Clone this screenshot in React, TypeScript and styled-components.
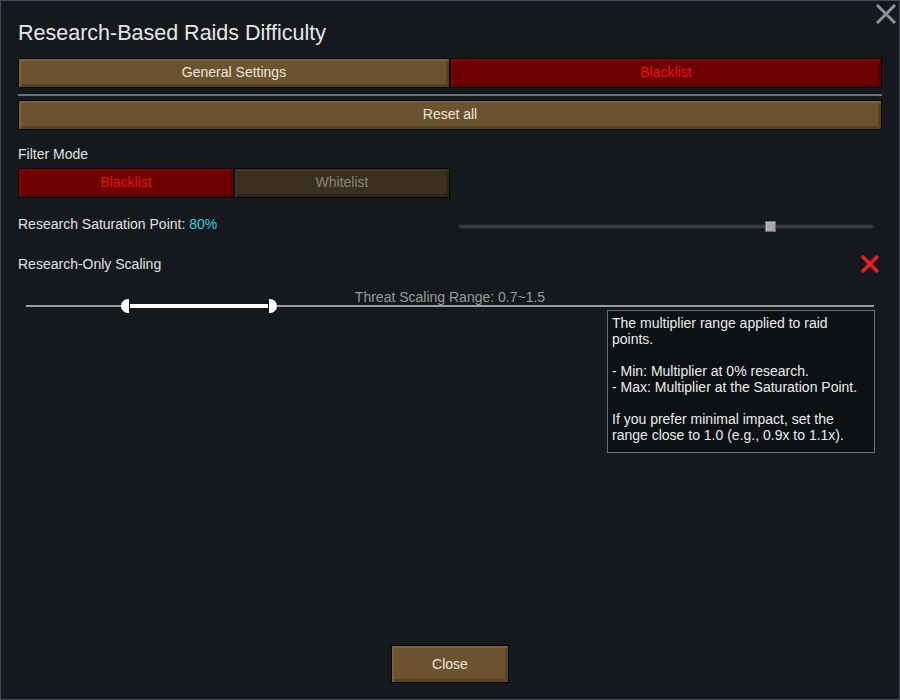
import React from "react";
import styled, { createGlobalStyle, css } from "styled-components";

const Global = createGlobalStyle`
  html, body { margin: 0; padding: 0; background: #15181d; }
  body { font-family: "Liberation Sans", Arial, sans-serif; }
  * { box-sizing: border-box; }
`;

const Window = styled.div`
  position: relative;
  width: 900px;
  height: 700px;
  background: #15181d;
  border: 1px solid #464a50;
  padding: 19px 17px 16px 17px;
  display: flex;
  flex-direction: column;
  color: #e2e2e2;
  font-size: 14px;
`;

const CloseIcon = styled.button`
  position: absolute;
  top: 2px;
  right: 2px;
  width: 22px;
  height: 22px;
  padding: 0;
  border: none;
  background: transparent;
  display: flex;
  align-items: center;
  justify-content: center;
`;

const Title = styled.h1`
  margin: 0 0 8px 0;
  height: 30px;
  line-height: 27px;
  font-size: 21.5px;
  font-weight: normal;
  color: #e6e6e6;
`;

type Tone = "tan" | "red" | "dim";

const toneStyles: Record<Tone, ReturnType<typeof css>> = {
  tan: css`
    background: #6b5330;
    color: #ece6d8;
    box-shadow: inset 2px 2px 0 #7d6238, inset -3px -3px 0 #574221;
  `,
  red: css`
    background: #6f0000;
    color: #e81414;
    box-shadow: inset 2px 2px 0 #7d0606, inset -3px -3px 0 #5a0000;
  `,
  dim: css`
    background: #3b2f1f;
    color: #858380;
    box-shadow: inset 2px 2px 0 #433524, inset -3px -3px 0 #302618;
  `,
};

const Button = styled.button<{ $tone: Tone }>`
  flex: 1;
  height: 30px;
  border: 1px solid #050505;
  font-family: "Liberation Sans", Arial, sans-serif;
  font-size: 14px;
  padding: 0 0 2px 0;
  cursor: pointer;
  ${(p) => toneStyles[p.$tone]}
`;

const ButtonRow = styled.div<{ $width?: number }>`
  display: flex;
  width: ${(p) => (p.$width ? `${p.$width}px` : "100%")};
`;

const Divider = styled.div`
  height: 2px;
  background: #6f7276;
  margin: 6px 0 4px 0;
`;

const Label = styled.div<{ $mt: number; $mb?: number }>`
  height: 20px;
  line-height: 20px;
  margin-top: ${(p) => p.$mt}px;
  margin-bottom: ${(p) => p.$mb ?? 0}px;
  color: #e2e2e2;
`;

const SettingRow = styled.div<{ $mt: number }>`
  display: flex;
  align-items: center;
  justify-content: space-between;
  height: 24px;
  margin-top: ${(p) => p.$mt}px;
`;

const Accent = styled.span`
  color: #2ed3e0;
`;

const SliderTrack = styled.div`
  position: relative;
  width: 416px;
  height: 5px;
  margin-right: 8px;
  margin-top: 4px;
  background: #393b3d;
  border: 1px solid #1f2123;
  border-radius: 3px;
`;

const SliderHandle = styled.div`
  position: absolute;
  top: -4px;
  width: 11px;
  height: 11px;
  margin-left: -5px;
  background: #a6a6a6;
  border: 1px solid #6c6c6c;
  box-shadow: inset 1px 1px 0 #c4c4c4;
`;

const RedX = styled.div`
  width: 22px;
  height: 22px;
  margin-right: 1px;
  display: flex;
  align-items: center;
  justify-content: center;
`;

const RangeBlock = styled.div`
  display: flex;
  flex-direction: column;
  margin: 14px 8px 0 8px;
`;

const RangeLabel = styled.div`
  height: 14px;
  line-height: 14px;
  text-align: center;
  font-size: 14px;
  color: #9a9a9a;
`;

const RangeTrack = styled.div`
  position: relative;
  height: 2px;
  margin-top: 1px;
  background: #9d9d9d;
`;

const RangeFill = styled.div`
  position: absolute;
  top: -1px;
  height: 4px;
  background: #ffffff;
`;

const RangeHandle = styled.div<{ $side: "left" | "right" }>`
  position: absolute;
  top: -6px;
  width: 9px;
  height: 14px;
  background: #ffffff;
  ${(p) =>
    p.$side === "left"
      ? css`
          border-radius: 7px 0 0 7px;
          border-right: 1px solid #15181d;
          margin-left: -9px;
        `
      : css`
          border-radius: 0 7px 7px 0;
          border-left: 1px solid #15181d;
        `}
`;

const Tooltip = styled.div`
  position: absolute;
  left: 606px;
  top: 309px;
  width: 268px;
  height: 143px;
  padding: 4px 4px;
  background: #0e1114;
  border: 1px solid #6a6f74;
  color: #ececec;
  font-size: 14px;
  line-height: 16px;
  white-space: pre-line;
`;

const Footer = styled.div`
  margin-top: auto;
  display: flex;
  justify-content: center;
`;

const CloseButton = styled(Button)`
  flex: none;
  width: 118px;
  height: 38px;
  padding: 0;
`;

const tooltipText = `The multiplier range applied to raid points.

- Min: Multiplier at 0% research.
- Max: Multiplier at the Saturation Point.

If you prefer minimal impact, set the range close to 1.0 (e.g., 0.9x to 1.1x).`;

export default function App() {
  const saturation = 0.752;
  const rangeStart = 104;
  const rangeEnd = 242;
  return (
    <>
      <Global />
      <Window>
        <CloseIcon aria-label="close">
          <svg width="20" height="20" viewBox="0 0 20 20">
            <path d="M2 2 L18 18 M18 2 L2 18" stroke="#8e9195" strokeWidth="3" strokeLinecap="square" />
          </svg>
        </CloseIcon>
        <Title>Research-Based Raids Difficulty</Title>
        <ButtonRow>
          <Button $tone="tan">General Settings</Button>
          <Button $tone="red">Blacklist</Button>
        </ButtonRow>
        <Divider />
        <ButtonRow>
          <Button $tone="tan">Reset all</Button>
        </ButtonRow>
        <Label $mt={14} $mb={4}>Filter Mode</Label>
        <ButtonRow $width={432}>
          <Button $tone="red">Blacklist</Button>
          <Button $tone="dim">Whitelist</Button>
        </ButtonRow>
        <SettingRow $mt={14}>
          <span>
            Research Saturation Point: <Accent>80%</Accent>
          </span>
          <SliderTrack>
            <SliderHandle style={{ left: `${saturation * 100}%` }} />
          </SliderTrack>
        </SettingRow>
        <SettingRow $mt={16}>
          <span>Research-Only Scaling</span>
          <RedX>
            <svg width="22" height="22" viewBox="0 0 22 22">
              <path d="M3 3 L19 19 M19 3 L3 19" stroke="#e3201e" strokeWidth="3.6" strokeLinecap="butt" />
            </svg>
          </RedX>
        </SettingRow>
        <RangeBlock>
          <RangeLabel>Threat Scaling Range: 0.7~1.5</RangeLabel>
          <RangeTrack>
            <RangeFill style={{ left: rangeStart, width: rangeEnd - rangeStart }} />
            <RangeHandle $side="left" style={{ left: rangeStart }} />
            <RangeHandle $side="right" style={{ left: rangeEnd }} />
          </RangeTrack>
        </RangeBlock>
        <Tooltip>{tooltipText}</Tooltip>
        <Footer>
          <CloseButton $tone="tan">Close</CloseButton>
        </Footer>
      </Window>
    </>
  );
}
